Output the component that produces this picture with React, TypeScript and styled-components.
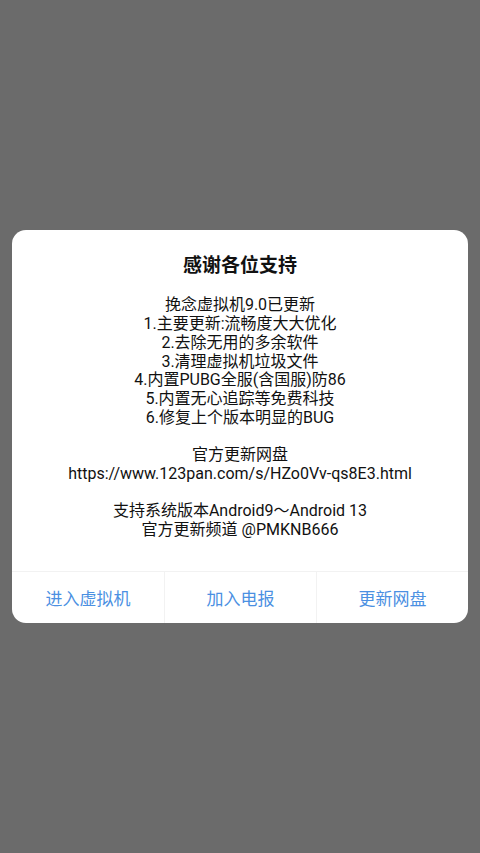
import React from "react";
import styled, { createGlobalStyle } from "styled-components";

const Global = createGlobalStyle({
	"html, body": {
		margin: 0,
		padding: 0,
		height: "100%",
	},
	body: {
		background: "#6b6b6b",
		fontFamily: 'Roboto, "Noto Sans CJK SC", sans-serif',
	},
	"#root": {
		height: "100%",
	},
});

const Screen = styled.div({
	height: "100%",
	display: "flex",
	alignItems: "center",
	justifyContent: "center",
	padding: "0 12px",
	boxSizing: "border-box",
});

const Dialog = styled.div({
	width: "100%",
	background: "#fff",
	borderRadius: 14,
	overflow: "hidden",
	display: "flex",
	flexDirection: "column",
});

const Title = styled.h2({
	margin: 0,
	padding: "24px 16px 0",
	fontSize: 19,
	lineHeight: "24px",
	fontWeight: 700,
	color: "#111",
	textAlign: "center",
});

const Message = styled.div({
	padding: "18px 16px 31px",
	fontSize: 16,
	lineHeight: "18.7px",
	color: "#111",
	textAlign: "center",
	whiteSpace: "pre-line",
});

const Actions = styled.div({
	display: "grid",
	gridTemplateColumns: "repeat(3, 1fr)",
	borderTop: "1px solid #f2f2f2",
	height: 51,
});

const Action = styled.button<{ $first?: boolean }>(({ $first }) => ({
	border: "none",
	borderLeft: $first ? "none" : "1px solid #f2f2f2",
	background: "transparent",
	color: "#4b90e2",
	fontFamily: "inherit",
	fontSize: 17,
	padding: 0,
	cursor: "pointer",
}));

const lines = [
	"挽念虚拟机9.0已更新",
	"1.主要更新:流畅度大大优化",
	"2.去除无用的多余软件",
	"3.清理虚拟机垃圾文件",
	"4.内置PUBG全服(含国服)防86",
	"5.内置无心追踪等免费科技",
	"6.修复上个版本明显的BUG",
	"",
	"官方更新网盘",
	"https://www.123pan.com/s/HZo0Vv-qs8E3.html",
	"",
	"支持系统版本Android9～Android 13",
	"官方更新频道 @PMKNB666",
];

const actions = ["进入虚拟机", "加入电报", "更新网盘"];

export default function App() {
	return <>
		<Global />
		<Screen>
			<Dialog>
				<Title>感谢各位支持</Title>
				<Message>{lines.join("\n")}</Message>
				<Actions>
					{actions.map((a, i) => <Action key={a} $first={i === 0}>{a}</Action>)}
				</Actions>
			</Dialog>
		</Screen>
	</>
}
